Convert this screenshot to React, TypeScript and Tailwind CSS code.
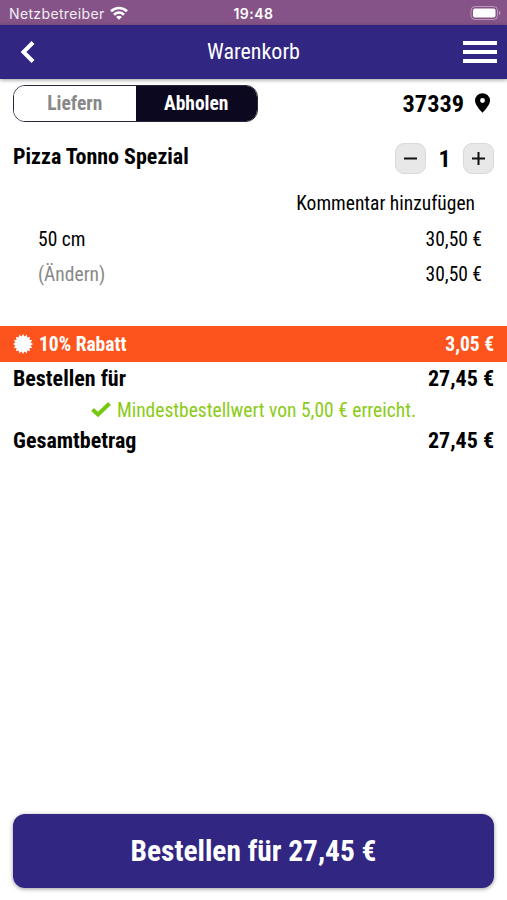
import type { ReactNode } from 'react';

interface PriceRowProps {
  label: ReactNode;
  price: string;
  className?: string;
}

function PriceRow({ label, price, className = '' }: PriceRowProps) {
  return (
    <div className={`flex items-center justify-between ${className}`}>
      <span>{label}</span>
      <span>{price}</span>
    </div>
  );
}

function StatusBar() {
  return (
    <div className="grid h-[25px] shrink-0 grid-cols-3 items-center bg-[#855387] pt-[2px] font-['Inter',sans-serif] text-[14px] leading-none text-white [font-stretch:100%]">
      <div className="flex items-center gap-[5px] pl-[9px] text-white/90">
        <span className="tracking-[0.36px]">Netzbetreiber</span>
        <svg className="mb-[2px]" width="18" height="14" viewBox="0 0 18 14" fill="none" stroke="white" strokeWidth="2.6">
          <path d="M1 5.200C5.600.900 12.400.900 17 5.200" />
          <path d="M4 8.700c2.900-2.800 7.100-2.800 10 0" />
          <path d="M9 13.800l-2.900-2.900c1.600-1.500 4.200-1.500 5.800 0z" fill="white" stroke="none" />
        </svg>
      </div>
      <span className="text-center font-semibold tracking-[0.5px]">19:48</span>
      <div className="flex justify-end pr-[6px]">
        <svg className="mb-[2px]" width="31" height="14" viewBox="0 0 31 14">
          <rect x="1" y=".5" width="26.500" height="13" rx="4" fill="none" stroke="white" strokeOpacity=".4" />
          <rect x="3" y="2.500" width="22.500" height="9" rx="2" fill="white" />
          <path d="M29 5v4c1.800-.7 1.800-3.300 0-4z" fill="white" fillOpacity=".5" />
        </svg>
      </div>
    </div>
  );
}

function Header() {
  return (
    <header className="relative grid h-[54px] shrink-0 grid-cols-3 items-center bg-[#312682] text-white shadow-[0_1px_4px_rgba(0,0,0,0.4)]">
      <button className="pl-[20px]" aria-label="Zurück">
        <svg width="15" height="22" viewBox="0 0 15 22" fill="none" stroke="white" strokeWidth="4">
          <path d="M13 1.500L3.500 11l9.500 9.500" />
        </svg>
      </button>
      <h1 className="text-center text-[22px] leading-none">Warenkorb</h1>
      <button className="flex flex-col items-end gap-[5px] pr-[10px]" aria-label="Menü">
        <span className="h-[4px] w-[34px] bg-white" />
        <span className="h-[4px] w-[34px] bg-white" />
        <span className="h-[4px] w-[34px] bg-white" />
      </button>
    </header>
  );
}

function StepButton({ plus = false }: { plus?: boolean }) {
  return (
    <button
      className="flex size-[31px] items-center justify-center rounded-[9px] border border-[#d9d9d9] bg-[#e8e8e8]"
      aria-label={plus ? 'Mehr' : 'Weniger'}
    >
      <svg width="15" height="15" viewBox="0 0 15 15" stroke="#111" strokeWidth="2">
        <path d={plus ? 'M1 7.500h13M7.500 1v13' : 'M1 7.500h13'} />
      </svg>
    </button>
  );
}

// Outline of the discount seal: 16 spikes around a circle
const sealPoints = Array.from({ length: 32 }, (_, i) => {
  const radius = i % 2 ? 7.7 : 10;
  const angle = (i * Math.PI) / 16;
  return `${10 + radius * Math.cos(angle)},${10 + radius * Math.sin(angle)}`;
}).join(' ');

export default function App() {
  return (
    <div className="flex h-screen flex-col bg-white font-['Roboto_Condensed','Roboto',sans-serif] text-black [font-stretch:75%]">
      <StatusBar />
      <Header />

      <main className="flex flex-1 flex-col">
        <div className="flex items-center justify-between px-[13px] pt-[6px]">
          <div className="grid h-[37px] w-[245px] grid-cols-2 overflow-hidden rounded-[12px] border border-[#29263a] text-[19.500px] font-bold leading-none">
            <button className="bg-white text-[#888]">Liefern</button>
            <button className="bg-[#0c0820] text-white">Abholen</button>
          </div>
          <div className="flex items-center gap-[11px] pr-[4px] text-[24.300px] font-bold leading-none">
            <span className="pt-[2px]">37339</span>
            <svg className="mb-px" width="15" height="20" viewBox="0 0 16 21">
              <path
                fillRule="evenodd"
                d="M8 0a8 8 0 0 0-8 7.800C0 12.500 5 17.500 8 21c3-3.500 8-8.500 8-13.200A8 8 0 0 0 8 0zm0 5.200a2.600 2.600 0 1 1 0 5.200 2.600 2.600 0 0 1 0-5.200z"
              />
            </svg>
          </div>
        </div>

        <section className="flex h-[204px] flex-col">
          <div className="flex h-[63px] items-center justify-between px-[13px] pt-[10px]">
            <h2 className="mb-[3px] text-[22px] font-bold leading-none">Pizza Tonno Spezial</h2>
            <div className="flex items-center">
              <StepButton />
              <span className="w-[37px] text-center text-[24px] font-bold leading-none">1</span>
              <StepButton plus />
            </div>
          </div>
          <button className="h-[36px] pr-[32px] pt-[2px] text-right text-[19.500px] leading-none">Kommentar hinzufügen</button>
          <PriceRow className="h-[35px] pl-[38px] pr-[25px] pt-[2px] text-[19.500px]" label="50 cm" price="30,50 €" />
          <PriceRow
            className="h-[35px] pl-[38px] pr-[25px] pt-[2px] text-[19.500px]"
            label={<span className="text-[#888]">(Ändern)</span>}
            price="30,50 €"
          />
        </section>

        <PriceRow
          className="h-[36px] bg-[#fd541e] px-[13px] pt-px text-[19.500px] font-bold text-white"
          label={
            <span className="flex items-center gap-[6px]">
              <svg className="mb-[2px]" width="20" height="20" viewBox="0 0 20 20">
                <polygon points={sealPoints} fill="white" />
              </svg>
              10% Rabatt
            </span>
          }
          price="3,05 €"
        />
        <PriceRow className="h-[32px] px-[13px] text-[22px] font-bold" label="Bestellen für" price="27,45 €" />
        <p className="flex h-[31px] items-center justify-center gap-[6px] text-[19.500px] leading-none text-[#8acb16]">
          <svg width="20" height="15" viewBox="0 0 20 15" fill="none" stroke="#76c80e" strokeWidth="4">
            <path d="M1.500 7.500l5.500 5L18.500 1.500" />
          </svg>
          <span className="pt-[2px]">Mindestbestellwert von 5,00 € erreicht.</span>
        </p>
        <PriceRow className="h-[31px] px-[13px] text-[22px] font-bold" label="Gesamtbetrag" price="27,45 €" />
      </main>

      <footer className="px-[13px] pb-[12px]">
        <button className="h-[74px] w-full rounded-[12px] bg-[#312682] pt-[2px] text-[29.400px] font-bold leading-none text-white shadow-[0_1px_4px_rgba(0,0,0,0.4)]">
          Bestellen für 27,45 €
        </button>
      </footer>
    </div>
  );
}
